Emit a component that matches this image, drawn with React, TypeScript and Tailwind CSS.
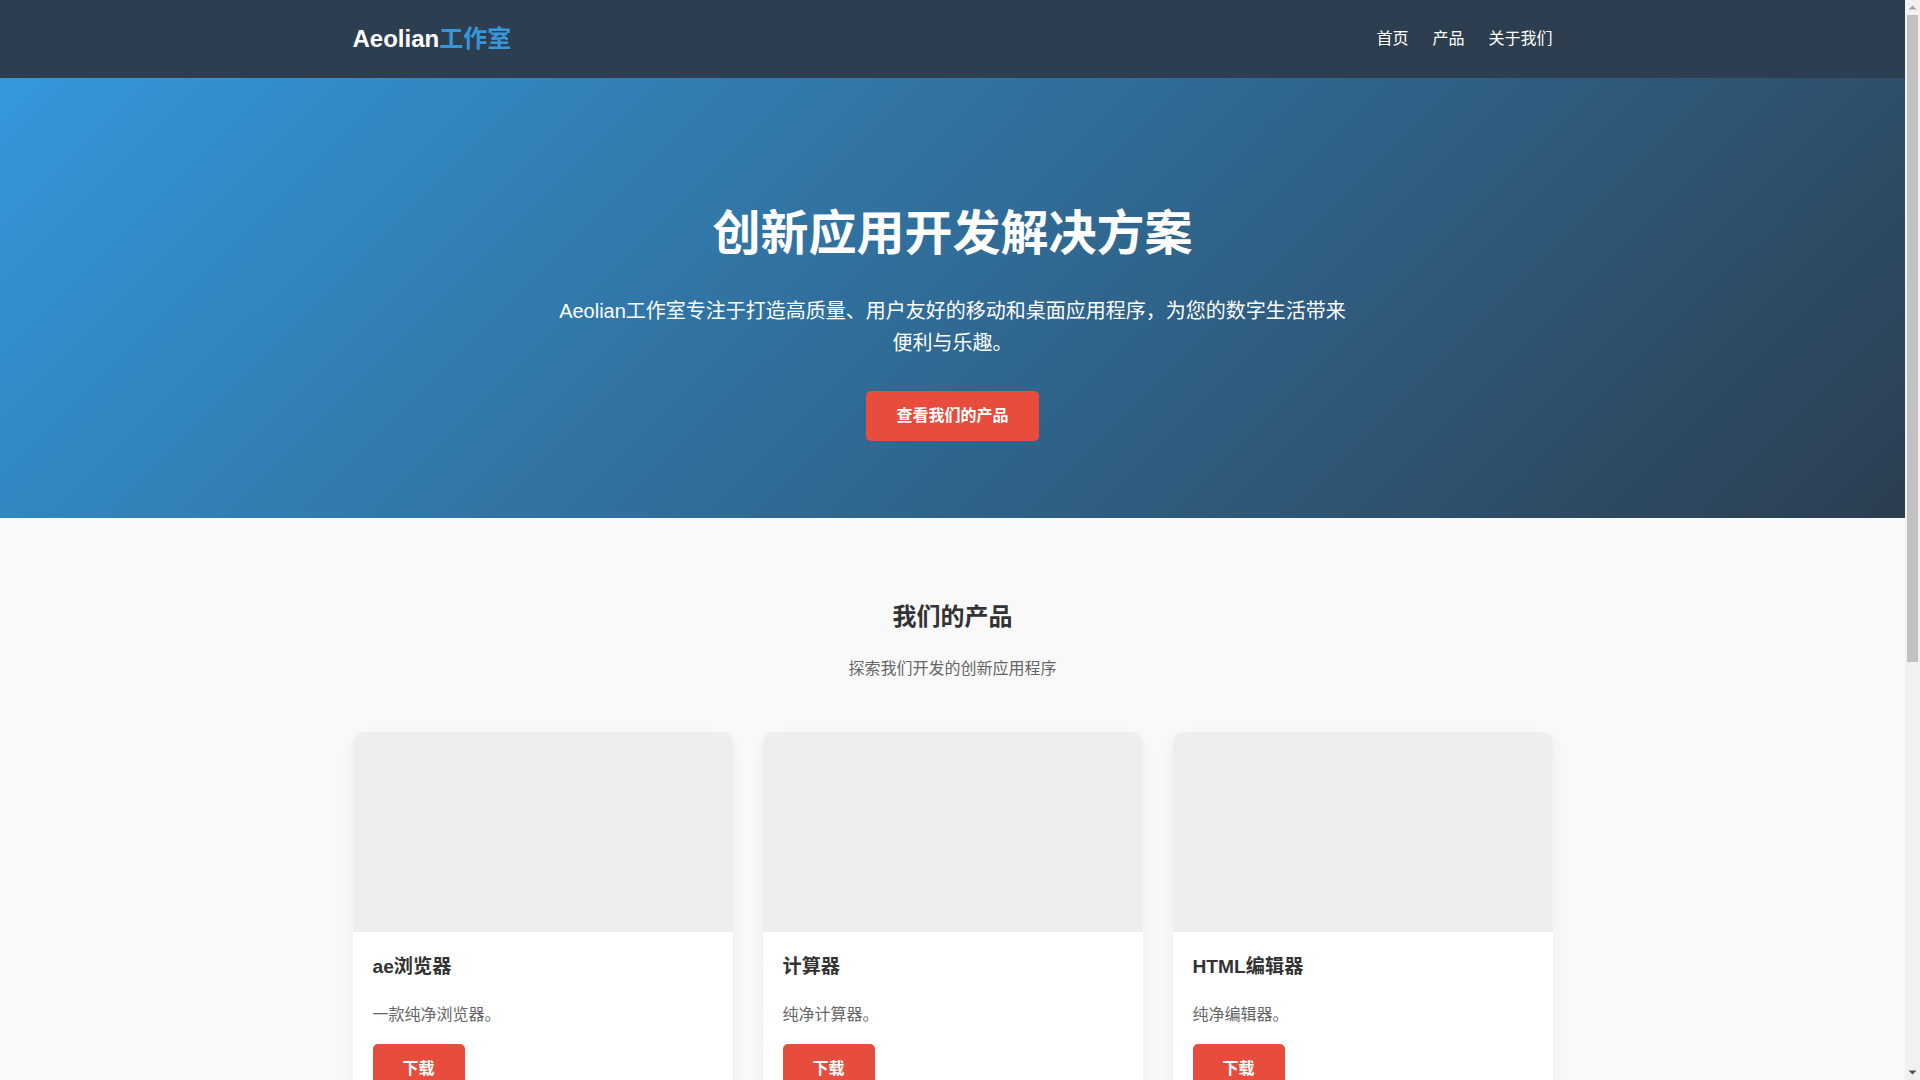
const PRODUCTS = [
  { name: "ae浏览器", desc: "一款纯净浏览器。" },
  { name: "计算器", desc: "纯净计算器。" },
  { name: "HTML编辑器", desc: "纯净编辑器。" },
];

const NAV = ["首页", "产品", "关于我们"];

// the browser's classic scrollbar, as seen in the screenshot
function Scrollbar() {
  return (
    <div className="w-[15px] shrink-0 h-screen bg-[#f1f1f1] flex flex-col">
      <div className="h-[15px] flex items-center justify-center">
        <svg width="9" height="9" viewBox="0 0 9 9">
          <path d="M0.5 6.5 L4.5 2.5 L8.5 6.5 Z" fill="#a3a3a3" />
        </svg>
      </div>
      <div className="h-[647px] mx-[2px] bg-[#c1c1c1]" />
      <div className="flex-1" />
      <div className="h-[15px] flex items-center justify-center">
        <svg width="9" height="9" viewBox="0 0 9 9">
          <path d="M0.5 2.5 L4.5 6.5 L8.5 2.5 Z" fill="#505050" />
        </svg>
      </div>
    </div>
  );
}

export default function App() {
  return (
    <div className="flex h-screen overflow-hidden bg-[#f9f9f9] text-[#333] leading-[1.6] font-['Liberation_Sans',Arial,'Noto_Sans_CJK_SC',sans-serif]">
      <main className="flex-1 min-w-0 overflow-hidden">
        <header className="bg-[#2c3e50] text-white py-5">
          <div className="max-w-[1200px] mx-auto flex items-center justify-between">
            <div className="text-[24px] font-bold">
              Aeolian<span className="text-[#3498db]">工作室</span>
            </div>
            <nav className="flex gap-6 text-[16px]">
              {NAV.map((n) => (
                <a key={n} href="#" className="text-white">
                  {n}
                </a>
              ))}
            </nav>
          </div>
        </header>

        <section className="bg-[linear-gradient(135deg,#3498db,#2c3e50)] text-white text-center pt-[118px] pb-[77px]">
          <h1 className="text-[48px] font-bold mb-[22px]">创新应用开发解决方案</h1>
          <p className="text-[20px] max-w-[800px] mx-auto mb-8">
            Aeolian工作室专注于打造高质量、用户友好的移动和桌面应用程序，为您的数字生活带来便利与乐趣。
          </p>
          <a href="#" className="inline-block bg-[#e74c3c] text-white text-[16px] font-bold px-[30px] py-3 rounded-[5px]">
            查看我们的产品
          </a>
        </section>

        <section className="py-20">
          <div className="max-w-[1200px] mx-auto">
            <div className="text-center mb-[50px]">
              <h2 className="text-[24px] font-bold mb-5">我们的产品</h2>
              <p className="text-[16px] text-[#666]">探索我们开发的创新应用程序</p>
            </div>
            <div className="grid grid-cols-3 gap-[30px]">
              {PRODUCTS.map((p) => (
                <div key={p.name} className="bg-white rounded-[10px] overflow-hidden shadow-[0_5px_15px_rgba(0,0,0,0.05)]">
                  <div className="h-[200px] bg-[#eee]" />
                  <div className="p-5">
                    <h3 className="text-[19.2px] font-bold mb-5">{p.name}</h3>
                    <p className="text-[16px] text-[#666] mb-4">{p.desc}</p>
                    <a href="#" className="inline-block bg-[#e74c3c] text-white text-[16px] font-bold px-[30px] py-3 rounded-[5px]">
                      下载
                    </a>
                  </div>
                </div>
              ))}
            </div>
          </div>
        </section>
      </main>
      <Scrollbar />
    </div>
  );
}
